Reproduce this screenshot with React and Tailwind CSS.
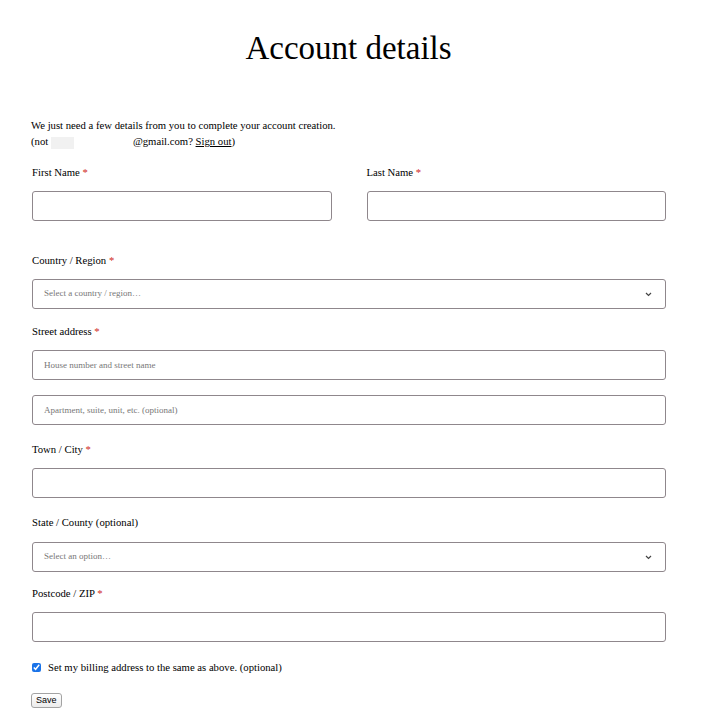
import React from 'react';

const inputCls =
  "block w-full h-[30px] rounded-[3px] border border-[#8f878c] bg-white pl-[11px] text-[9px] text-[#222] placeholder:text-[#777] outline-none";

function Label({ children, required, className = "" }) {
  return (
    <label className={`block text-[10.7px] leading-4 text-black ${className}`}>
      {children}
      {required && <span className="text-[#d0271b]"> *</span>}
    </label>
  );
}

function SelectBox({ placeholder }) {
  return (
    <div className="flex h-[30px] w-full items-center justify-between rounded-[3px] border border-[#8f878c] bg-white pl-[11px] pr-[13px]">
      <span className="text-[9px] text-[#777]">{placeholder}</span>
      <svg width="7" height="5" viewBox="0 0 7 5" className="text-[#444]">
        <polyline points="1,1 3.5,3.5 6,1" fill="none" stroke="currentColor" strokeWidth="1.2" />
      </svg>
    </div>
  );
}

export default function App() {
  return (
    <div className="min-h-[723px] bg-white pl-[31px] pr-[38px] font-['Liberation_Serif',serif] text-black">
      <h1 className="pt-[28px] text-center text-[33px] font-normal leading-[40px]">Account details</h1>

      {/* Intro */}
      <div className="mt-[49px] text-[10.7px] leading-4">
        <p>We just need a few details from you to complete your account creation.</p>
        <p>
          (not{" "}
          <span className="inline-block h-[12px] w-[23px] bg-[#f1f1f1] align-middle"></span>
          <span className="inline-block w-[59px]"></span>
          @gmail.com? <a className="underline">Sign out</a>)
        </p>
      </div>

      <form className="pl-[1px]">
        {/* Name row */}
        <div className="mt-[15px] grid grid-cols-2 gap-[35px]">
          <div>
            <Label required>First Name</Label>
            <input className={`${inputCls} mt-[11px]`} />
          </div>
          <div>
            <Label required>Last Name</Label>
            <input className={`${inputCls} mt-[11px]`} />
          </div>
        </div>

        <Label required className="mt-[31px]">Country / Region</Label>
        <div className="mt-[11px]">
          <SelectBox placeholder="Select a country / region…" />
        </div>

        <Label required className="mt-[14px]">Street address</Label>
        <input className={`${inputCls} mt-[11px]`} placeholder="House number and street name" />
        <input className={`${inputCls} mt-[15px]`} placeholder="Apartment, suite, unit, etc. (optional)" />

        <Label required className="mt-[16px]">Town / City</Label>
        <input className={`${inputCls} mt-[11px]`} />

        <Label className="mt-[16px]">State / County (optional)</Label>
        <div className="mt-[12px]">
          <SelectBox placeholder="Select an option…" />
        </div>

        <Label required className="mt-[13px]">Postcode / ZIP</Label>
        <input className={`${inputCls} mt-[11px]`} />

        <label className="mt-[17px] flex h-4 items-center gap-[7px] text-[10.7px]">
          <input type="checkbox" defaultChecked className="m-0 h-[9px] w-[9px] accent-[#1a73e8]" />
          <span>Set my billing address to the same as above. (optional)</span>
        </label>

        <button
          type="button"
          className="mt-[18px] -ml-[1px] block h-[15px] rounded-[3px] border border-[#a3a3a3] bg-gradient-to-b from-white to-[#ececec] px-[4px] font-['Liberation_Sans',sans-serif] text-[9px] leading-[13px] text-black"
        >
          Save
        </button>
      </form>
    </div>
  );
}
